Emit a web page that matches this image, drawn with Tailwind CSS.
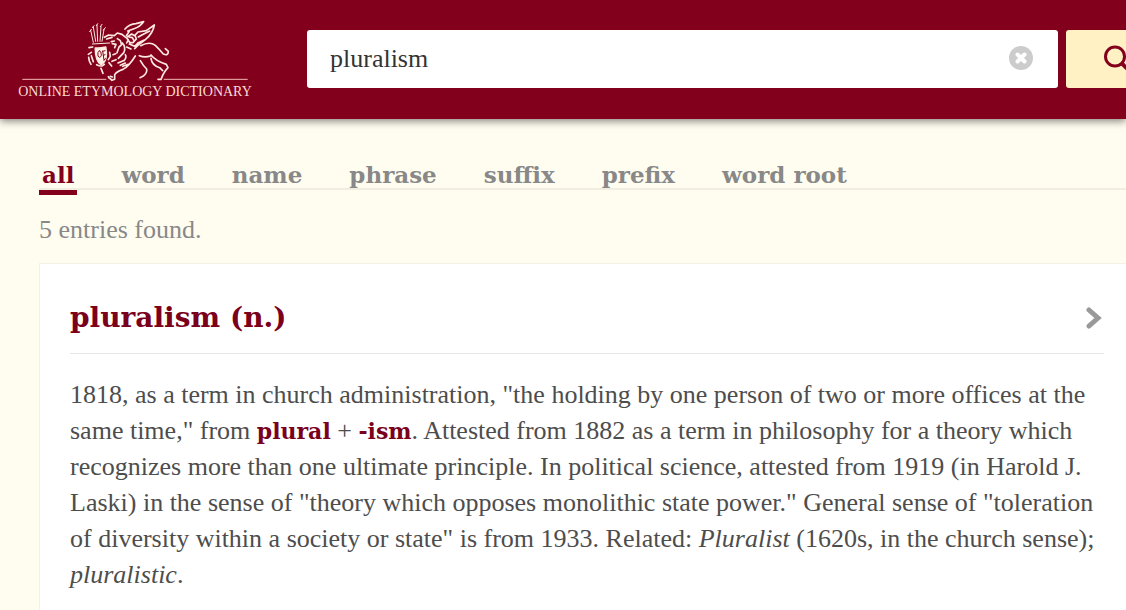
<!DOCTYPE html>
<html lang="en">
<head>
<meta charset="utf-8">
<title>pluralism | Online Etymology Dictionary</title>
<script src="https://cdn.jsdelivr.net/npm/@tailwindcss/browser@4"></script>
</head>
<body class="min-h-screen overflow-x-hidden bg-[#fffdf0] font-['Liberation_Serif',serif] text-[26px] text-[#4d4d4d]">
<div class="flex min-h-screen flex-col overflow-hidden">
<header class="relative flex h-[119px] shrink-0 items-start bg-[#83001d] pl-[21px] shadow-[0_2px_8px_rgba(0,0,0,0.5)]">
  <a href="#" class="mt-5 block w-[228px] shrink-0 text-center text-[#f9dcd4]" aria-label="Online Etymology Dictionary">
    <svg class="block h-[62px] w-full" viewBox="18 15 684 186" fill="none" stroke="#fde9df" stroke-width="5" stroke-linecap="round" stroke-linejoin="round">
      <path d="M22 193H274M446 193H698" stroke="#f2b9b3" stroke-width="3" stroke-linecap="butt"/>
      <path d="M232 87L284 84M235 82L227 46M242 79L235 36M248 79L246 30M255 79L258 35M261 79L267 43M224 50l5 -7M232 38l5-6M244 32l4-6M256 35l5-7M265 45l6-7" stroke-width="3"/>
      <path d="M241 99Q252 101 272 96Q277 123 270 137Q266 145 258 149Q241 138 241 99Z" fill="#fff4e8"/>
      <path d="M253 107Q246 111 249 123Q255 132 259 121Q260 108 253 107M263 108L267 135M263 109L270 107M265 121L270 119M267 135L272 131" stroke="#83001d" stroke-width="3"/>
      <path d="M222 98L233 96M220 118L229 112M221 127L223 138L228 148M229 122L235 140M245 149Q256 155 263 152L268 148M258 160L264 175" />
      <path d="M268 67L281 60L298 62L307 54L321 58L332 67M275 72L291 67M289 80L298 78M292 86L303 88L299 98M307 71L316 77L320 89L312 96L306 113M322 84Q333 95 327 112L310 130M284 112L286 124L280 134M282 143L290 153M294 119L302 116M291 139L303 134M309 144L325 137M331 119Q336 126 327 137M316 151L331 144" />
      <path d="M330 42Q342 28 363 26L386 20Q377 35 355 42L338 48M343 49L334 62M338 65L350 57L359 62L369 51L394 47L418 30Q414 55 391 74L370 90L359 101M335 69L345 83L354 83L364 72L360 61M343 87L359 94L370 83L388 75M342 66L352 68L357 77M370 66L382 59L404 48M340 74L335 84M335 96L348 102" />
      <path d="M377 92Q404 78 421 91Q434 104 445 117Q460 124 460 109L451 101M373 122Q390 129 408 122M408 120Q422 138 454 148L459 158Q450 167 444 179L438 193L429 193M408 130Q410 150 434 158L443 167" />
      <path d="M361 123Q341 155 324 163Q305 169 299 179L299 193L291 196L285 190M323 154L340 148M376 137Q385 153 395 162Q397 174 385 183L375 188M286 184L292 186M283 190L280 185" />
    </svg>
    <span class="flex justify-center whitespace-nowrap text-[14px] leading-[20px]">ONLINE ETYMOLOGY DICTIONARY</span>
  </a>
  <form class="ml-[58px] mt-[30px] flex h-[58px] min-w-0 flex-1 gap-2" onsubmit="return false">
    <div class="relative min-w-0 flex-1">
      <input type="text" aria-label="Search" value="pluralism" class="h-full w-full rounded-[3px] bg-white pl-[23px] pr-16 text-[26px] text-[#333] outline-none">
      <button type="reset" aria-label="Clear" class="absolute right-[25px] top-4 size-6">
        <svg class="size-6" viewBox="0 0 24 24"><circle cx="12" cy="12" r="12" fill="#ccc"/><path d="M8.500 8.500L15.500 15.500M15.500 8.500L8.500 15.500" stroke="#fff" stroke-width="4" stroke-linecap="round"/></svg>
      </button>
    </div>
    <button type="submit" aria-label="Submit search" class="flex w-[60px] shrink-0 items-center overflow-hidden rounded-l-[3px] bg-[#fff1c4] pl-[38px]">
      <svg class="size-7 shrink-0" viewBox="0 0 28 28" fill="none" stroke="#83001d" stroke-width="3"><circle cx="11" cy="11.500" r="9.500"/><path d="M17 17.500L25 25.500" stroke-width="4"/></svg>
    </button>
  </form>
</header>
<main class="flex flex-1 flex-col pl-[39px]">
  <nav class="mt-10 flex h-[31px] gap-[41px] whitespace-nowrap border-b-2 border-[#f1eedf] font-['DejaVu_Serif',serif] text-[23px] font-bold leading-[32px] text-[#888]">
    <a href="#" class="h-[36px] border-b-[5px] border-[#83001d] px-[3px] text-[#83001d]">all</a>
    <a href="#" class="px-[3px]">word</a>
    <a href="#" class="px-[3px]">name</a>
    <a href="#" class="px-[3px]">phrase</a>
    <a href="#" class="px-[3px]">suffix</a>
    <a href="#" class="px-[3px]">prefix</a>
    <a href="#" class="px-[3px]">word root</a>
  </nav>
  <p class="mt-6 leading-8 text-[#888]">5 entries found.</p>
  <section class="mt-[17px] flex-1 border-l border-t border-[#f4f2e6] bg-white pl-[30px] pr-[22px]">
    <a href="#" class="flex h-[90px] items-center justify-between border-b border-[#e6e6e6] pt-[18px] text-[#7a001b]">
      <h1 class="font-['DejaVu_Serif',serif] text-[28px] font-bold">pluralism (n.)</h1>
      <svg class="mr-[2px] h-6 w-4" viewBox="0 0 16 24" fill="none" stroke="#999" stroke-width="5" stroke-linecap="round"><path d="M3 4L12 12L3 20"/></svg>
    </a>
    <p class="mt-[23px] leading-9">1818, as a term in church administration, "the holding by one person of two or more offices at the same time," from <a href="#" class="font-['DejaVu_Serif',serif] text-[22px] font-bold leading-none text-[#7a001b]">plural</a> + <a href="#" class="font-['DejaVu_Serif',serif] text-[22px] font-bold leading-none text-[#7a001b]">-ism</a>. Attested from 1882 as a term in philosophy for a theory which recognizes more than one ultimate principle. In political science, attested from 1919 (in Harold J. Laski) in the sense of "theory which opposes monolithic state power." General sense of "toleration of diversity within a society or state" is from 1933. Related: <i>Pluralist</i> (1620s, in the church sense); <i>pluralistic</i>.</p>
  </section>
</main>
</div>
</body>
</html>
